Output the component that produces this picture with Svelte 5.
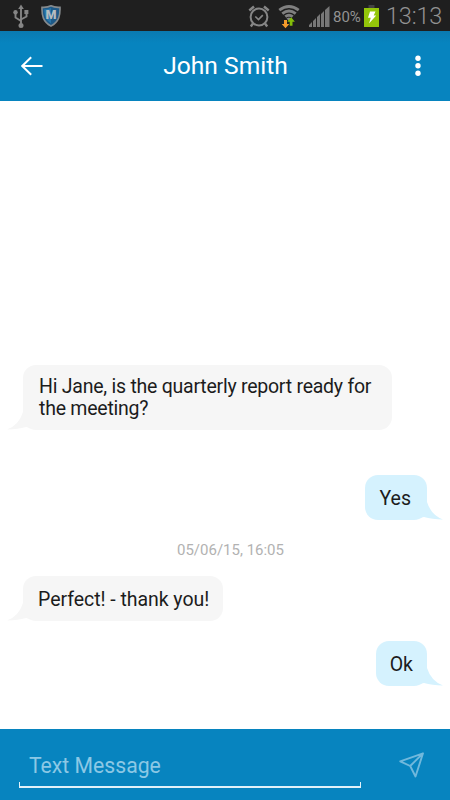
<script lang="ts">
  type Entry = {
    kind: 'in' | 'out' | 'date';
    text: string;
    long?: boolean;
  };

  const contact = 'John Smith';
  const entries: Entry[] = [
    { kind: 'in', text: 'Hi Jane, is the quarterly report ready for the meeting?', long: true },
    { kind: 'out', text: 'Yes' },
    { kind: 'date', text: '05/06/15, 16:05' },
    { kind: 'in', text: 'Perfect! - thank you!' },
    { kind: 'out', text: 'Ok' },
  ];

  let draft = $state('');
</script>

<div class="screen">
  <div class="status">
    <svg class="usb" width="16" height="25" viewBox="0 0 16 25" fill="none" stroke="#858585" stroke-width="1.9">
      <path d="M8 4v17M2.5 9v4.5L8 17M13.5 9v3.5L8 15.5" />
      <path d="M8 .5 5.2 5h5.6z" fill="#858585" stroke="none" />
      <path d="M11.4 6h4v4h-4z" fill="#858585" stroke="none" />
      <circle cx="2.5" cy="8.3" r="2.2" fill="#858585" stroke="none" />
      <circle cx="8" cy="21.6" r="2.5" fill="#858585" stroke="none" />
    </svg>
    <svg class="shield" width="20" height="22" viewBox="0 0 20 22">
      <path d="M10 .8C7.5 2.1 4 2.5 1 2.3c-.3 8 1 14.5 9 18.7 8-4.2 9.3-10.7 9-18.7C16 2.5 12.5 2.1 10 .8z" fill="#1e5a88" stroke="#858a8d" stroke-width="1.6" />
      <path d="M10 3v15.5C5 15 3.3 11 3.2 4.3 6 4.3 8 4 10 3z" fill="#2876aa" />
      <text x="10" y="13.5" text-anchor="middle">M</text>
    </svg>
    <span class="grow"></span>
    <svg class="alarm" width="22" height="23" viewBox="0 0 22 23" fill="none" stroke="#868686" stroke-width="2">
      <circle cx="11" cy="12" r="8.4" />
      <path d="m7.3 11.5 3.2 3 4.3-4.3" stroke-width="1.7" />
      <path d="M1.3 5.5 6 1.5M20.7 5.5 16 1.5M5 18.5l-2.2 3M17 18.5l2.2 3" stroke-width="2.4" />
    </svg>
    <svg class="wifi" width="22" height="24" viewBox="0 0 22 24">
      <g fill="none" stroke="#808080" stroke-width="2.9">
        <path d="M1.3 5.2Q11-2.2 20.7 5.2" />
        <path d="M4.3 8.6Q11 3.4 17.7 8.6" />
        <path d="M7.3 11.7Q11 8.9 14.7 11.7" />
      </g>
      <path d="m8.5 13.500 2.500-1 2 1-2 2.500z" fill="#858585" />
      <path d="M6 15h3v4h2.300l-3.800 4.300L3.700 19H6z" fill="#f59b2c" />
      <path d="M11.700 20.800v-4H9.300l3.800-4.500 3.800 4.500h-2.400v4z" fill="#83bd08" />
    </svg>
    <svg class="signal" width="21" height="21" viewBox="0 0 21 21" fill="#777">
      <path d="M0 21v-2l3-3v5zM4 21v-6l3-3v9zM8 21V11l3-3v13zM12 21V8l3-3v16zM16 21V4l4.500-4v21z" />
    </svg>
    <span class="percent">80%</span>
    <svg class="battery" width="15" height="22" viewBox="0 0 15 22">
      <path d="M4.500 0h6v3h-6z" fill="#434343" />
      <path d="M0 3h15v19H0z" fill="#94c60a" />
      <path d="M6 6.500h5.500l-1.800 4h2.500L5 18.500l1.800-5.700H4z" fill="#fff" />
    </svg>
    <span class="clock">13:13</span>
  </div>

  <header>
    <button class="back" aria-label="Back">
      <svg width="22" height="20" viewBox="0 0 22 20" fill="none" stroke="#fff" stroke-width="2">
        <path d="M10.200 1.300 1.200 10l9 8.700M1.200 10H21.500" />
      </svg>
    </button>
    <h1>{contact}</h1>
    <button class="more" aria-label="More options">
      <svg width="6" height="22" viewBox="0 0 6 22" fill="#fff">
        <circle cx="3" cy="3.200" r="2.700" />
        <circle cx="3" cy="10.700" r="2.700" />
        <circle cx="3" cy="18.200" r="2.700" />
      </svg>
    </button>
  </header>

  <main>
    {#each entries as entry}
      {#if entry.kind === 'date'}
        <time>{entry.text}</time>
      {:else}
        <div class="bubble {entry.kind}" class:long={entry.long}>
          {entry.text}
          <svg class="tail" width="24" height="26" viewBox="0 0 24 26">
            <path d="M16 0v8Q12 21 0 25.500q11-.5 19-2.500L24 24V0z" />
          </svg>
        </div>
      {/if}
    {/each}
  </main>

  <footer>
    <div class="field">
      <input type="text" placeholder="Text Message" aria-label="Text Message" bind:value={draft} />
    </div>
    <button class="send" aria-label="Send">
      <svg width="26" height="26" viewBox="0 0 26 26" fill="none" stroke="#70b8dc" stroke-width="1.900" stroke-linejoin="round">
        <path d="M24 1.300 1.200 9.300 11.200 14 16.500 24.500zM11.200 14 24 1.300" />
      </svg>
    </button>
  </footer>
</div>

<style>
  .screen {
    display: flex;
    flex-direction: column;
    width: 450px;
    height: 800px;
    overflow: hidden;
    background: #fff;
    font-family: Roboto, "Liberation Sans", sans-serif;
  }
  svg { display: block; flex: none; }
  button { display: flex; padding: 0; border: 0; background: none; }

  .status {
    display: flex;
    flex: none;
    align-items: flex-start;
    box-sizing: border-box;
    height: 31px;
    padding: 0 9px 0 13px;
    background: #1f1f1f;
    color: #929292;
    white-space: nowrap;
  }
  .grow { flex: 1; }
  .usb { margin-top: 4px; }
  .shield { margin: 5px 0 0 12px; }
  .shield text { fill: #b5bcc0; font-size: 12.5px; font-weight: 900; }
  .alarm { margin: 5px 8px 0 0; }
  .wifi { margin: 5px 9px 0 0; }
  .signal { margin: 6px 3px 0 0; }
  .percent { width: 31px; font-size: 15px; line-height: 34px; }
  .battery { margin-top: 5px; }
  .clock {
    width: 55px;
    margin-left: 7px;
    font-size: 23.5px;
    font-weight: 300;
    line-height: 33px;
    letter-spacing: -0.2px;
  }

  header {
    display: flex;
    flex: 0 0 70px;
    align-items: center;
    box-sizing: border-box;
    padding: 0 29px 0 21px;
    background: linear-gradient(#0a7ab1, #0784bf 12px);
    color: #fff;
  }
  h1 {
    flex: 1;
    margin: 0;
    padding: 0 7px 0 0;
    font-size: 24.6px;
    font-weight: 400;
    line-height: 30px;
    text-align: center;
  }

  main {
    display: flex;
    flex: 1;
    flex-direction: column;
    justify-content: flex-end;
    padding: 0 23px 43px;
  }
  .bubble {
    position: relative;
    box-sizing: border-box;
    padding: 13px 14px 10px 15px;
    border-radius: 13px;
    color: #1c1c1c;
    font-size: 19.5px;
    line-height: 22px;
  }
  .in { align-self: flex-start; max-width: 369px; background: #f6f6f6; letter-spacing: -0.04px; }
  .long { padding: 11px 12px 10px 16px; letter-spacing: -0.24px; }
  .out { align-self: flex-end; margin-top: 45px; padding-right: 16px; background: #d5f2fe; }
  .tail { position: absolute; bottom: 0; }
  .in .tail { left: -16px; fill: #f6f6f6; }
  .out .tail { right: -16px; fill: #d5f2fe; transform: scaleX(-1); }
  .out:last-child { margin-top: 20px; padding-right: 14px; padding-left: 14px; }
  time {
    align-self: center;
    margin: 20px 0 16px;
    padding-left: 11px;
    color: #b2b2b2;
    font-size: 15px;
    line-height: 20px;
  }

  footer {
    display: flex;
    flex: 0 0 71px;
    align-items: flex-start;
    box-sizing: border-box;
    padding: 0 25px 0 19px;
    background: #0784bf;
  }
  .field {
    position: relative;
    width: 342px;
    height: 59px;
    box-sizing: border-box;
    border-bottom: 2px solid #e0f1f9;
  }
  .field::before,
  .field::after {
    position: absolute;
    bottom: 0;
    width: 1px;
    height: 4px;
    background: #e0f1f9;
    content: "";
  }
  .field::before { left: 0; }
  .field::after { right: 0; }
  input {
    width: 100%;
    height: 36px;
    box-sizing: border-box;
    margin: 18px 0 0;
    padding: 0 10px;
    border: 0;
    outline: 0;
    background: none;
    color: #fff;
    font: 21.2px Roboto, "Liberation Sans", sans-serif;
  }
  input::placeholder { color: #8cc8e5; opacity: 1; }
  .send { margin: 23px 0 0 auto; }
</style>
